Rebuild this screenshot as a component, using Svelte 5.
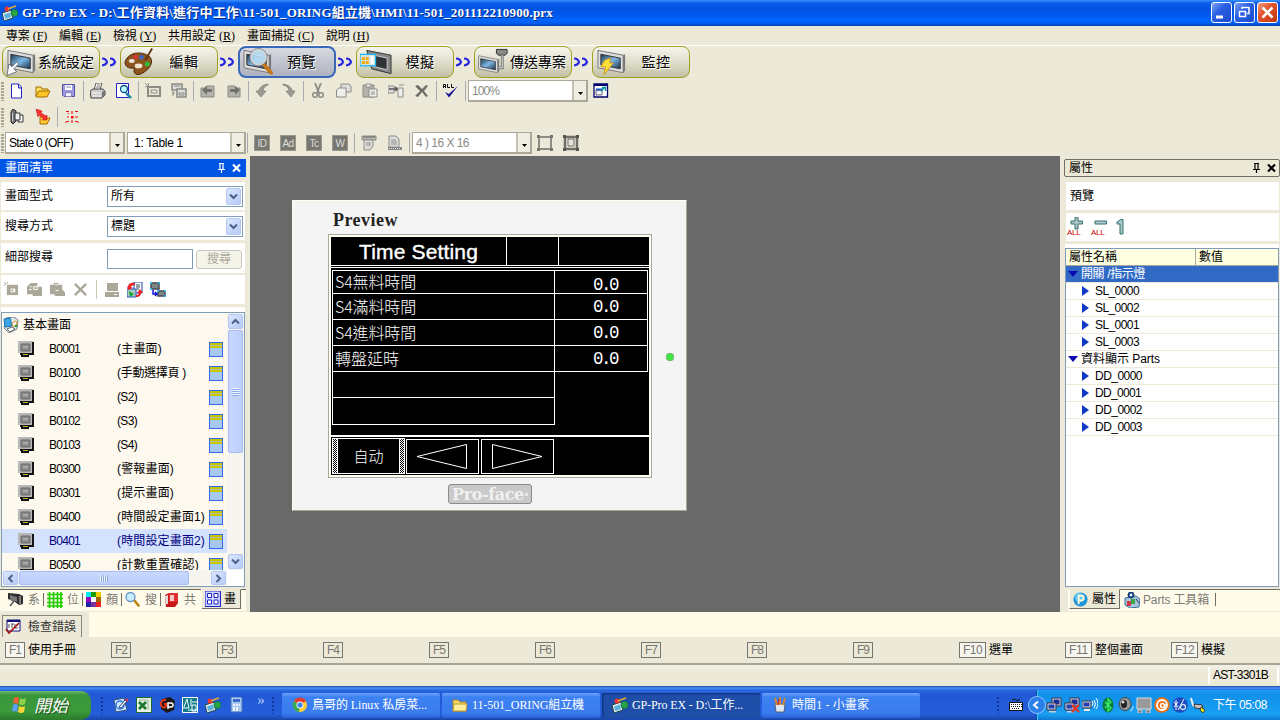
<script>
  // Spreads or tightens a label so that it takes the given width in pixels.
  function fit(node, width) {
    const n = [...node.textContent].length;
    node.style.letterSpacing = '0px';
    const natural = node.getBoundingClientRect().width;
    node.style.letterSpacing = (width - natural) / n + 'px';
  }

  const page = 'M4 1H11L14 4V15H4Z';
  const G = '#8c8c84';
  const frame = '<path d="M2 2L28 7V25L2 20Z" fill="#ddd" stroke="#777"/><path d="M2 20L28 25L30 23V6L28 7V25Z" fill="#777"/><path d="M5 6L25 10V21L5 17Z" fill="url(#scr)" stroke="#333"/>';
  const pc = '<path d="M6 1h9v8H6z" fill="#d8d8ee" stroke="#334"/><path d="M7.500 2.500h6v5h-6z" fill="#1a2f9a"/><path d="M1 6h9v7H1z" fill="#d8d8ee" stroke="#334"/><path d="M2.500 7.500h6v4h-6z" fill="#2440a8"/><path d="M3 14h7v1.500H3z" fill="#ccd"/>';
  const parts = '<path d="M0 8l9-3 2 8-9 3z" fill="#dde8ee" stroke="#244"/><path d="M2 9.500l6-2 1 4.500-5.500 2z" fill="#59b0d8"/><circle cx="12.500" cy="8" r="3.500" fill="#29a545" stroke="#175"/><circle cx="5" cy="4" r="2.500" fill="#e33"/><path d="M6 4l5-2 3-1" stroke="#da3" stroke-width="1.800" fill="none"/>';

  const icons = {
    app: parts,
    new: '<path d="' + page + '" transform="translate(-1.500)" fill="#fff" stroke="#2222c8"/><path d="M9.500 1v4h3" fill="#bcd" stroke="#2222c8"/>',
    open: '<path d="M1 13V4h5l1 2h6v3" fill="#ffe060" stroke="#a46b00"/><path d="M1 13L4 8h11l-3 6H1z" fill="#ffc526" stroke="#a46b00"/>',
    save: '<path d="M1.500 1.500h12v12H3L1.500 12z" fill="#9c98e0" stroke="#54509c"/><path d="M4 2h7v5H4z" fill="#fff"/><path d="M5 4h5" stroke="#88a"/><path d="M4.500 9.500h6v4h-6z" fill="#eef" stroke="#8884b8"/>',
    print: '<path d="M4 7L6 0h6l-2 7z" fill="#fff" stroke="#555"/><path d="M7 2h3M6 4h4" stroke="#777"/><path d="M0 8l3-2h10l2 2v4l-3 3H1z" fill="#ccc" stroke="#444"/><path d="M2 10h9M2 13h9" stroke="#f4f4f4"/><path d="M12 9l3-2v5l-3 3z" fill="#777"/>',
    find: '<path d="M.5 .5h12v14H.5z" fill="#fff" stroke="#2222c8"/><path d="M10 10l5 5" stroke="#28a" stroke-width="2.500"/><circle cx="8" cy="6" r="3.500" fill="#bff" stroke="#124a90" stroke-width="1.300"/>',
    scr: '<path d="M0 0l3 3M0 4l3-1M4 0L3 3" stroke="' + G + '"/><path d="M3 4h12v9H3z" fill="none" stroke="' + G + '" stroke-width="2"/><path d="M6 7h6v3H6z" fill="none" stroke="' + G + '"/>',
    scrs: '<path d="M1 1h10v6H1z" fill="#ddd" stroke="' + G + '" stroke-width="1.600"/><path d="M6 6h9v8H6z" fill="#ddd" stroke="' + G + '" stroke-width="1.600"/><path d="M3 3h6M8 10h5v2H8z" stroke="' + G + '" fill="none"/><path d="M1 10h3M2 8v5" stroke="' + G + '"/>',
    back: '<path d="M1 5h5V3h8v11H1z" fill="#b4b4ac" stroke="' + G + '"/><path d="M2 7l5-4v3h5v3H7v3z" fill="#72726c"/>',
    fwd: '<path d="M2 3h7v2h5v9H2z" fill="#b4b4ac" stroke="' + G + '"/><path d="M14 7L9 3v3H4v3h5v3z" fill="#72726c"/>',
    undo: '<path d="M13 1C7 2 4 5 4 8H1l5 6 5-6H8c0-3 2-5 5-6z" fill="#9c9c94" stroke="#77776f" stroke-width=".7"/>',
    redo: '<path d="M2 1c6 1 9 4 9 7h3l-4 6-5-6h3C8 5 6 3 2 2z" fill="#9c9c94" stroke="#77776f" stroke-width=".7"/>',
    cut: '<path d="M5 0l4 10M11 0L7 10" stroke="' + G + '" stroke-width="1.800"/><circle cx="5" cy="12" r="2.300" fill="none" stroke="' + G + '" stroke-width="1.500"/><circle cx="11" cy="12" r="2.300" fill="none" stroke="' + G + '" stroke-width="1.500"/>',
    copy: '<path d="M5 1h8l2 2v6H5z" fill="#ddd" stroke="' + G + '"/><path d="M3 5h7v9H.5V7z" fill="#eee" stroke="' + G + '"/>',
    paste: '<path d="M1 2h11v12H1z" fill="#b4b4ac" stroke="' + G + '"/><path d="M4 1h5v3H4z" fill="#eee" stroke="' + G + '"/><path d="M7 6h8v8H7z" fill="#eee" stroke="' + G + '"/><path d="M9 9h4M9 11h4" stroke="' + G + '"/>',
    move: '<path d="M0 3h6v7H0z" fill="#ddd" stroke="' + G + '"/><path d="M1 6h8M7 4l3 2-3 2" stroke="#555" fill="none" stroke-width="1.500"/><path d="M10 5h5v9h-5zM11 2h5" fill="#eee" stroke="' + G + '"/>',
    del: '<path d="M1 3l3-1 4 4 4-4 2 1-4 5 4 5-2 1-4-5-4 5-3-1 5-5z" fill="#6e6e68"/>',
    check: '<path d="M2 9l4 5.500L15 3l-7 6-2 2z" fill="#11119a"/><path d="M.5 5V1.500h2V5M.5 3.500h2M4.500 1v3.500h2.500M8.500 1v3.500h2.500" stroke="#111" fill="none"/>',
    popup: '<path d="M1 1h13.500v13H1z" fill="#fff" stroke="#00006c" stroke-width="1.300"/><path d="M1 1h13v2H1z" fill="#00006c"/><path d="M3 7h6v5H3z" fill="#eee" stroke="#667"/><path d="M3 6.500h7" stroke="#15c" stroke-width="2"/><path d="M8 8l4-4M9 4.500h3.500V8" stroke="#0a8f9e" fill="none" stroke-width="1.500"/>',
    book: '<path d="M2 3l2-3 3 2v10l-3 3-2-2z" fill="#777" stroke="#222"/><path d="M3.500 4v8" stroke="#ccc"/><path d="M9 6h5v7H9z" fill="#fff" stroke="#333"/><path d="M6 4h5v7H6z" fill="#eee" stroke="#333"/>',
    import: '<path d="M5 8h4l1 1h5l-3 6H5z" fill="#fc3" stroke="#a46b00"/><path d="M1 0l6 2-1 2 5 3 1-1v5H7l1.500-1.500L4 6 3 8z" fill="#f33" stroke="#b00" stroke-width=".5"/>',
    spark: '<path d="M2 2.500h3M4.500 4v1M8 2v3M11 2.500h3M2 12.500h3M8 11v3M11 12.500h3M2 14v-1M14 14v-1M3 8h2M11 8h3" stroke="#e81818" stroke-width="1.200"/><path d="M7 7h2.500v2.500H7z" fill="#f00"/>',
    doc1: '<path d="M1 1h14v4H1z" fill="#b8b8b0" stroke="' + G + '"/><path d="M3 1v2M5 1v2M7 1v2M9 1v2M11 1v2M13 1v2" stroke="#666"/><path d="M3 5h9v6l-3 4H3z" fill="#ddd" stroke="' + G + '"/><path d="M5 8h5M5 10h5" stroke="' + G + '"/>',
    doc2: '<path d="M2 1h7l3 3v8H2z" fill="#ddd" stroke="' + G + '"/><path d="M4 5h5M4 7h6M4 9h6" stroke="' + G + '"/><path d="M1 12h14v3H1z" fill="#888"/><path d="M2 13.500h12" stroke="#ddd" stroke-dasharray="1 1"/>',
    rect: '<path d="M2 2h12v12H2z" fill="none" stroke="#6e6e68" stroke-width="1.500"/><path d="M0 0h3v3H0zM13 0h3v3h-3zM0 13h3v3H0zM13 13h3v3h-3z" fill="#77776f"/>',
    rect2: '<path d="M2 2h12v12H2z" fill="none" stroke="#6e6e68" stroke-width="2.500"/><path d="M5 4h6v7H5z" fill="#e4e4dc" stroke="#6e6e68"/><path d="M0 0h3v3H0zM13 0h3v3h-3zM0 13h3v3H0zM13 13h3v3h-3z" fill="#55554f"/>',
    gscr: '<path d="M0 0l2 2M0 3h2M4 0L3 2" stroke="#aca899"/><path d="M3 3h12v11H3z" fill="#aca899"/><path d="M7 7h5v4H7z" fill="#fff"/><path d="M8 8h2v2H8z" fill="#aca899"/>',
    gcopy: '<path d="M0 5l4-4h7v4h5v10H6v-2H0z" fill="#aca899"/><path d="M3 5h2M2 8h3M7 5h4v3H7z" stroke="#fff" fill="none"/>',
    gpaste: '<path d="M0 3h4V1h5v2h4v5l3 3v4H5v-2H0z" fill="#aca899"/><path d="M5 3h4M6 9h3" stroke="#fff"/>',
    gdel: '<path d="M2 2l12 12M14 2L2 14" stroke="#aca899" stroke-width="2.500"/>',
    gpc: '<path d="M3 1h11v8H3zM1 10h14v5H1z" fill="#aca899"/><path d="M10 12.500h3" stroke="#fff"/>',
    swap: '<path d="M7 0h8v11H7z" fill="#fff" stroke="#1a46a8"/><path d="M9 3h4M9 5h4M9 7h3" stroke="#345"/><path d="M0 7h9v8H0z" fill="#a8c8c0" stroke="#2b58c0"/><path d="M2 9l5 3-4 3z" fill="#12a532"/><path d="M8 1C3 0 1 3 1 5L0 4l1 4 5-2-2-1c0-1 1-2 4-2zM9 15c4 0 5-2 5-4h2l-3-4-3 4h2c0 1-1 2-3 2z" fill="#e22"/>',
    link: '<path d="M1 1h8v6H1zM8 9h7v5H8z" fill="#80868a" stroke="#444a50" stroke-width="1.500"/><path d="M0 0h2v2H0zM8 0h2v2H8zM0 6h2v2H0zM7 8h2v2H7zM14 8h2v2h-2zM14 13h2v2h-2z" fill="#38b0e0"/><path d="M3 8v4h4M5 10l2 2-2 2" stroke="#11d" stroke-width="1.500" fill="none"/>',
    base: '<path d="M3 1l8-1 4 3-1 9-8 4-5-5z" fill="#dde4ea" stroke="#78868f"/><path d="M1 2l6-1 2 8-7 1z" fill="#39a5e8" stroke="#1b6fb0"/><path d="M9 6l4-2 1 3-4 3z" fill="#fff" stroke="#e0952b"/><path d="M4 12l5-2 3 2-5 3z" fill="#fff" stroke="#666"/><circle cx="13" cy="9" r="1.300" fill="#2a9d3a"/>',
    mon: '<path d="M0 0h15v12H0z" fill="#b8b8b8"/><path d="M14 1h2v13H2v-2h12z" fill="#151515"/><path d="M3 3h9v7H3z" fill="#8a8a8a" stroke="#666"/><path d="M5 6h5" stroke="#ccc"/><path d="M3 13h8v3H3z" fill="#111"/><path d="M5 13h5v1H5z" fill="#c8b400"/>',
    camera: '<path d="M0 1l11 1 4 2v8l-4 1-4-3-7-3z" fill="#2e2e2e"/><path d="M2 3l7 2v5L2 8z" fill="#777"/><path d="M12 4v8" stroke="#999" stroke-width="1.500"/><path d="M2 14l4-5" stroke="#555" stroke-width="1.500"/>',
    grid: '<path d="M0 2.500h16M0 6.500h16M0 10.500h16M0 14h16M2.500 0v16M6.500 0v16M10.500 0v16M14 0v16" stroke="#2c0" stroke-width="1.700"/>',
    palette: '<path d="M0 0h5v5H0z" fill="#0ee"/><path d="M5 0h5v5H5z" fill="#290"/><path d="M10 0h5v5h-5z" fill="#ec0"/><path d="M0 5h5v5H0z" fill="#90b"/><path d="M5 5h5v5H5z" fill="#fff"/><path d="M10 5h5v5h-5z" fill="#960"/><path d="M0 10h5v5H0z" fill="#22a"/><path d="M5 10h5v5H5z" fill="#739"/><path d="M10 10h5v5h-5z" fill="#e22"/>',
    mag: '<path d="M9 8l4.500 5.500" stroke="#b8860b" stroke-width="2.600" stroke-linecap="round"/><circle cx="5.500" cy="5" r="4.500" fill="#c8ecff" stroke="#6a96c8" stroke-width="1.300"/>',
    red: '<path d="M1 3l4-2h9v10l-3 4H2z" fill="#c81818"/><path d="M5 1h9v9H5z" fill="#e03030"/><path d="M6 3h4v6H6z" fill="#f6c8c8"/><path d="M1 4l3-1v9H2z" fill="#ddd"/>',
    panes: '<path d="M0 0h15.500v15.500H0z" fill="#cdd8ff" stroke="#2222c8" stroke-width="1.200"/><path d="M2.500 2.500h4v4h-4zM9 2.500h4v4H9zM2.500 9h4v4h-4zM9 9h4v4H9z" fill="#fff" stroke="#2222c8"/>',
    err: '<path d="M2 1h13v11H2z" fill="#fff" stroke="#11117c"/><path d="M2 1h13v2H2z" fill="#11117c"/><path d="M4 5v4M6 5h3M7 5v4M10 5v4h3" stroke="#555" fill="none"/><path d="M1 10l3 4L14 4" stroke="#a01010" stroke-width="1.700" fill="none"/>',
    prop: '<circle cx="8" cy="8" r="7.500" fill="#1b93d8"/><circle cx="7" cy="6" r="5" fill="#5cc8f4"/><path d="M6 13V4h3a2 2 0 010 5H6" fill="none" stroke="#fff8d8" stroke-width="2"/>',
    toolbox: '<path d="M1 6l11-2 4 3-1 8-9 1-5-3z" fill="#a8c4dc" stroke="#36709c"/><path d="M3 9h4v5H3z" fill="#d23a4a"/><path d="M7 7h4v5H7z" fill="#3aa546"/><circle cx="7" cy="3" r="3" fill="#2a62c8" stroke="#134"/><circle cx="7" cy="3" r="1.200" fill="#fff"/><path d="M12 7l3 4" stroke="#334"/>',
    allplus: '<path d="M8 0h3v4h4.500v3H11v5H8V7H4V4h4z" fill="#a8c4c4" stroke="#36706c"/>',
    allminus: '<path d="M4 4h11.500v3H4z" fill="#b4c8d0" stroke="#36706c"/>',
    one: '<path d="M2 3l4-2.500h2V15H5V5H2z" fill="#a8c8c8" stroke="#36706c"/>',
    mail: '<path d="M1 3l10-2 3 12-11 2z" fill="#cfe4ff" stroke="#357"/><circle cx="7" cy="8" r="4" fill="none" stroke="#2c7ae0" stroke-width="1.500"/><path d="M6 10l6-7 2 1-6 7z" fill="#fff" stroke="#247"/><path d="M13 2l2 2" stroke="#e33" stroke-width="2"/>',
    excel: '<path d="M.5 .5h15v15H.5z" fill="#e8f2e4" stroke="#1c6a2c"/><path d="M3 5l7 7M10 5l-7 7" stroke="#1c7a30" stroke-width="2.800"/><path d="M12 4v9M3 3h10" stroke="#8cb894"/>',
    gp: '<path d="M3 2l8-2 5 4-1 9-7 3-6-4z" fill="#201818"/><path d="M7 3C4 2 1 5 2 8s4 3 5 1V7H5" fill="none" stroke="#e31" stroke-width="2"/><path d="M9 12V6h3a2 2 0 010 4H9" fill="none" stroke="#fff" stroke-width="1.500"/>',
    cad: '<path d="M.5 .5h15v15H.5z" fill="#0e7c88" stroke="#fff"/><path d="M1 11h6M2 10l3-8 2 9M9 2v7M6 13h9M10 8h4v6h-4zM10 5h5" stroke="#fff" fill="none"/>',
    calc: '<path d="M3 0h10l1 1v14H3z" fill="#a8c8f4" stroke="#4a72b4"/><path d="M5 2h7v3H5z" fill="#3b6bc8"/><path d="M5 8h2M8 8h2M11 8h1M5 11h2M8 11h2M5 13h2M8 13h2" stroke="#fff" stroke-width="1.500"/>',
    chrome: '<circle cx="8" cy="8" r="7" fill="#fc3"/><path d="M8 8L2 4a7 7 0 0112 0z" fill="#e33b2e"/><path d="M8 8L2 4a7 7 0 005 11z" fill="#34a853"/><circle cx="8" cy="8" r="3.500" fill="#fff"/><circle cx="8" cy="8" r="2.600" fill="#3b82ea"/>',
    folder: '<path d="M1 14V3h5l2 2h6v9z" fill="#f6d868" stroke="#b08a20"/><path d="M1 14l1-7h13l-1 7z" fill="#fff0a0" stroke="#c09a30"/>',
    paint: '<path d="M3 7h10l-1 8H4z" fill="#dfe9f4" stroke="#567"/><path d="M5 8L3 1M8 8V0M11 8l2-7" stroke="#e08a2c" stroke-width="1.800"/><path d="M6 8l1-6" stroke="#c33" stroke-width="1.500"/>',
    kbd: '<path d="M1.500 6.500h13v8h-13z" fill="#fff" stroke="#111"/><path d="M3 8.500h11M3 10.500h11M4 12.500h8" stroke="#222" stroke-dasharray="1 1"/><path d="M4 4q2-2 4 0t4-1" stroke="#111" fill="none"/>',
    net: pc,
    netx: pc + '<path d="M8 8l7 7M15 8l-7 7" stroke="#f33018" stroke-width="2"/>',
    wifi: '<path d="M0 4h9v7H0z" fill="#d8d8ee" stroke="#334"/><path d="M1.500 5.500h6v4h-6z" fill="#2440a8"/><path d="M2 13h6" stroke="#eee" stroke-width="2"/><path d="M10 4q2 3 0 5M12 3q3 4 0 8M14 1q4 6 0 11" stroke="#fff" fill="none"/>',
    bt: '<ellipse cx="8" cy="8" rx="5.500" ry="7.500" fill="#0c7c3c"/><path d="M5 5l6 6-3 3V2l3 3-6 6" stroke="#3bf06a" fill="none" stroke-width="1.300"/>',
    spk: '<ellipse cx="7" cy="7" rx="6" ry="6.500" fill="#999" stroke="#444"/><ellipse cx="6" cy="7" rx="3" ry="4" fill="#222"/><circle cx="5" cy="5" r="1.500" fill="#ddd"/><path d="M12 14q3-1 3-5" stroke="#8cf" fill="none" stroke-width="1.500"/>',
    hub: '<path d="M1 1h14v11H1z" fill="#999" stroke="#ddd"/><path d="M2 13h4v3H2zM10 13h4v3h-4z" fill="#777" stroke="#ccc"/>',
    avast: '<circle cx="8" cy="8" r="7.800" fill="#f07010"/><circle cx="8" cy="8" r="5" fill="none" stroke="#fff" stroke-width="1.800"/><circle cx="8.500" cy="8.500" r="2" fill="none" stroke="#fff" stroke-width="1.400"/><path d="M11 7v5" stroke="#fff" stroke-width="1.400"/>',
    disc: '<circle cx="8" cy="8" r="7.800" fill="#1d4cc0"/><path d="M2 5l4 5M6 5L2 10M4 3v10M6 13l6-11" stroke="#fff"/><circle cx="11" cy="10" r="2.500" fill="none" stroke="#cde" stroke-width="1.300"/>',
    plug: '<path d="M1 1l2 7 5 3" stroke="#eee" stroke-width="2" fill="none"/><path d="M4 7l8 1 1 4-8-1z" fill="#ccc" stroke="#333"/><path d="M11 10l4 3-2 3-3-3z" fill="#e8e020" stroke="#442"/>'
  };

  const wizIcons = {
    setup: frame + '<path d="M1 28l2-12 3 3 5-5 2 2-5 5 3 3z" fill="#fff" stroke="#456" stroke-width=".8"/>',
    edit: '<path d="M1 14C4 4 17 2 26 8c6 6 0 14-8 18-7 3-9-2-7-6-4 1-10 0-10-6z" fill="#8e5420" stroke="#4a2608"/><ellipse cx="8" cy="13" rx="3" ry="2" fill="#e8e4dc"/><circle cx="12" cy="9" r="2.300" fill="#d33"/><circle cx="18" cy="9" r="2.300" fill="#36c"/><circle cx="24" cy="16" r="2.600" fill="#3b3"/><ellipse cx="15" cy="18" rx="4" ry="2.500" fill="#f2e4cc"/><path d="M22 12L29 0" stroke="#5a3008" stroke-width="1.800"/>',
    preview: frame + '<path d="M22 16l8 9" stroke="#c87418" stroke-width="4" stroke-linecap="round"/><circle cx="17" cy="9" r="8" fill="#b8dcf4" fill-opacity=".9" stroke="#d4d4d4" stroke-width="2"/><circle cx="17" cy="9" r="9" fill="none" stroke="#667" stroke-width=".7"/>',
    sim: '<path d="M7 2L32 7V26L12 21Z" fill="#888" stroke="#333"/><path d="M10 6L28 10V22L12 18Z" fill="#303438" stroke="#ccc"/><path d="M0 6h16v12H0z" fill="#d8e0e0" stroke="#18b8f0" stroke-width="1.300"/><path d="M2 9h3v3H2zM6 9h3v3H6zM2 13h3v3H2zM6 13h3v3H6z" fill="#f0a800"/><path d="M11 8h3v8h-3z" fill="#fff"/>',
    send: '<g transform="translate(-1 6) scale(.76)">' + frame + '</g><path d="M19 1h11v4l-2 2h-7l-2-2z" fill="#888" stroke="#333"/><path d="M25 7v13h-4" stroke="#777" stroke-width="3" fill="none"/><path d="M25 7v13h-4" stroke="#ddd" fill="none"/>',
    monitor: frame + '<path d="M9 12l6-2-1 5h4L8 27l2-8H5z" fill="#ffe13a" stroke="#d89000" stroke-width=".8"/>'
  };

  const menus = [['專案', 'F', 41], ['編輯', 'E', 42], ['檢視', 'Y', 43], ['共用設定', 'R', 67], ['畫面捕捉', 'C', 67], ['說明', 'H', 43]];
  const wizard = [
    ['setup', '系統設定', 56], ['edit', '編輯', 29], ['preview', '預覽', 29],
    ['sim', '模擬', 29], ['send', '傳送專案', 56], ['monitor', '監控', 29]
  ];
  const groups = [['new', 'open', 'save'], ['print', 'find'], ['scr', 'scrs'], ['back', 'fwd'], ['undo', 'redo'], ['cut', 'copy', 'paste', 'move', 'del'], ['check']];
  const screens = [
    ['B0001', '(主畫面)', 45], ['B0100', '(手動選擇頁 )', 69], ['B0101', '(S2)', 20], ['B0102', '(S3)', 20],
    ['B0103', '(S4)', 20], ['B0300', '(警報畫面)', 57], ['B0301', '(提示畫面)', 57],
    ['B0400', '(時間設定畫面1)', 88], ['B0401', '(時間設定畫面2)', 88], ['B0500', '(計數重置確認)', 82]
  ];
  const tabs = [['camera', '系'], ['grid', '位'], ['palette', '顏'], ['mag', '搜'], ['red', '共'], ['panes', '畫']];
  const props = [
    ['開關 /指示燈', true, 64], ['SL_0000', false, 44], ['SL_0002', false, 44], ['SL_0001', false, 44], ['SL_0003', false, 44],
    ['資料顯示 Parts', true, 79], ['DD_0000', false, 47], ['DD_0001', false, 46], ['DD_0002', false, 47], ['DD_0003', false, 47]
  ];
  const timers = ['S4無料時間', 'S4滿料時間', 'S4進料時間', '轉盤延時', '', ''];
  const keys = ['使用手冊', '', '', '', '', '', '', '', '', '選單', '整個畫面', '模擬'];
  const tasks = [
    ['chrome', '鳥哥的 Linux 私房菜...', 115], ['folder', '11-501_ORING組立機', 112],
    ['app', 'GP-Pro EX - D:\\工作...', 111], ['paint', '時間1 - 小畫家', 77]
  ];
</script>

{#snippet ic(name, size = 16)}
  <svg class="ic" width={size} height={size} viewBox="0 0 16 16">{@html icons[name]}</svg>
{/snippet}

{#snippet arrow(rot)}
  <svg class="ic" width="9" height="9" viewBox="0 0 9 9"><path d="M1 2.500L4.500 6L8 2.500" transform="rotate({rot} 4.500 4.500)" fill="none" stroke="#4d6185" stroke-width="2" /></svg>
{/snippet}

{#snippet drop()}
  <b><svg width="5" height="3"><path d="M0 0h5L2.500 3z" fill="#000" /></svg></b>
{/snippet}

{#snippet pins(color)}
  <svg class="ic pins" width="26" height="12" viewBox="0 0 26 12">
    <path d="M3 1.500h5M4 1v6M7 1v6M2 7.500h7M5.500 8v3" stroke={color} stroke-width="1.200" fill="none" />
    <path d="M17 2.500l7 7M24 2.500l-7 7" stroke={color} stroke-width="2.200" />
  </svg>
{/snippet}

<svg class="defs" width="0" height="0">
  <linearGradient id="scr" x1="0" y1="0" x2="1" y2="1">
    <stop offset="0" stop-color="#1a3850" /><stop offset=".5" stop-color="#7eb8e4" /><stop offset="1" stop-color="#16304c" />
  </linearGradient>
</svg>

<div class="win">
  <header class="title">
    {@render ic('app')}
    <b use:fit={531}>GP-Pro EX - D:\工作資料\進行中工作\11-501_ORING組立機\HMI\11-501_201112210900.prx</b>
    <div class="wbtns">
      <i><svg width="20" height="20"><path d="M4 14h7" stroke="#fff" stroke-width="3" /></svg></i>
      <i><svg width="20" height="20"><path d="M4.500 8.500h6v5h-6zM7 6V4.500h7v6h-2" fill="none" stroke="#fff" stroke-width="1.500" /></svg></i>
      <i class="x"><svg width="20" height="20"><path d="M4.500 4.500l10 10M14.500 4.500l-10 10" stroke="#fff" stroke-width="2.500" /></svg></i>
    </div>
  </header>

  <nav class="menu">
    {#each menus as [label, key, w]}<span use:fit={w}>{label} <em>(<u>{key}</u>)</em></span>{/each}
  </nav>

  <div class="wizard">
    {#each wizard as [name, label, w], i}
      {#if i}<svg class="chev" width="20" height="12"><path d="M2 2.500q4 0 5 3.500q-1 3-5 3.500M10 2.500q4 0 5 3.500q-1 3-5 3.500" fill="none" stroke="#2626e0" stroke-width="2.200" /></svg>{/if}
      <div class="step" class:on={name === 'preview'}>
        <svg width="32" height="29" viewBox="0 0 33 29">{@html wizIcons[name]}</svg>
        <div class="lab"><span use:fit={w}>{label}</span></div>
      </div>
    {/each}
  </div>

  <div class="bar">
    <i class="grip"></i>
    {#each groups as g}
      {#each g as name}<div class="tb">{@render ic(name)}</div>{/each}
      <i class="sep"></i>
    {/each}
    <div class="combo dim w120"><span use:fit={27}>100%</span>{@render drop()}</div>
    <div class="tb">{@render ic('popup')}</div>
  </div>
  <div class="bar">
    <i class="grip"></i>
    <div class="tb">{@render ic('book')}</div><div class="tb">{@render ic('import')}</div>
    <i class="sep"></i>
    <div class="tb">{@render ic('spark')}</div>
  </div>
  <div class="bar">
    <i class="grip"></i>
    <div class="combo w120"><span use:fit={64}>State 0 (OFF)</span>{@render drop()}</div>
    <div class="combo w119"><span class="ind"><span use:fit={49}>1: Table 1</span></span>{@render drop()}</div>
    <i class="sep"></i>
    {#each ['ID', 'Ad', 'Tc', 'W'] as t}<div class="tb"><span class="sq">{t}</span></div>{/each}
    <i class="sep"></i>
    <div class="tb">{@render ic('doc1')}</div><div class="tb">{@render ic('doc2')}</div>
    <i class="sep"></i>
    <div class="combo dim w120"><span use:fit={53}>4 ) 16 X 16</span>{@render drop()}</div>
    <div class="tb">{@render ic('rect')}</div><div class="tb">{@render ic('rect2')}</div>
  </div>

  <main>
    <aside class="left">
      <div class="ptitle"><span>畫面清單</span>{@render pins('#fff')}</div>
      <div class="prow"><span>畫面型式</span><div class="select"><span>所有</span><b>{@render arrow(0)}</b></div></div>
      <div class="prow"><span>搜尋方式</span><div class="select"><span>標題</span><b>{@render arrow(0)}</b></div></div>
      <div class="prow third"><span>細部搜尋</span><div class="input"></div><div class="btn">搜尋</div></div>
      <div class="ptools">
        {#each ['gscr', 'gcopy', 'gpaste', 'gdel'] as n}{@render ic(n, 15)}{/each}
        <i></i>
        {#each ['gpc', 'swap', 'link'] as n}{@render ic(n)}{/each}
      </div>
      <div class="listwrap">
        <div class="list">
          <div class="lmain">
            <div class="items">
              <div class="root">{@render ic('base')}<span use:fit={48}>基本畫面</span></div>
              {#each screens as [id, label, w]}
                <div class="item" class:sel={id === 'B0401'}>
                  {@render ic('mon')}
                  <span class="id"><span use:fit={31}>{id}</span></span>
                  <span class="nm"><span use:fit={w}>{label}</span></span>
                  <i class="card"></i>
                </div>
              {/each}
            </div>
            <div class="vsb"><b>{@render arrow(180)}</b><div class="vthumb"><i></i></div><div class="track"></div><b>{@render arrow(0)}</b></div>
          </div>
          <div class="hsb"><b>{@render arrow(90)}</b><div class="hthumb"><i></i></div><div class="track"></div><b>{@render arrow(-90)}</b></div>
        </div>
      </div>
      <div class="tabs lt">
        {#each tabs as [n, t], i}<div class="tab" class:cur={i === 5}>{@render ic(n)}<span>{t}</span></div>{/each}
        <div class="fill"></div>
      </div>
    </aside>

    <section class="work">
      <div class="device">
        <h1 use:fit={65}>Preview</h1>
        <i class="led"></i>
        <div class="screen">
          <div class="shead"><div><span use:fit={119}>Time Setting</span></div><div></div><div></div></div>
          <div class="sbody">
            {#each timers as t, i}
              <div class="trow" class:empty={!t} class:last={i === 5}>
                <div class="tl">{#if t}<span use:fit={i === 3 ? 64 : 81}>{t}</span>{/if}</div>
                {#if t}<div class="tv" class:low={i === 0}><span use:fit={24}>0.0</span></div>{/if}
              </div>
            {/each}
          </div>
          <div class="snav">
            <div class="auto"><div><span use:fit={30}>自动</span></div></div>
            <div class="nb"><svg width="71" height="33"><path d="M10 16.500L59.500 4.500v24z" fill="none" stroke="#fff" /></svg></div>
            <div class="nb"><svg width="71" height="33"><path d="M60 16.500L10.500 4.500v24z" fill="none" stroke="#fff" /></svg></div>
          </div>
        </div>
        <div class="brand"><span use:fit={77}>Pro-face·</span></div>
      </div>
    </section>

    <aside class="right">
      <div class="ptitle"><span>屬性</span>{@render pins('#000')}</div>
      <div class="prow">預覽</div>
      <div class="prow tools">
        <div class="all">{@render ic('allplus')}<small>ALL</small></div>
        <div class="all">{@render ic('allminus')}<small>ALL</small></div>
        {@render ic('one')}
      </div>
      <div class="pl">
        <div class="ph"><span>屬性名稱</span><span>數值</span></div>
        {#each props as [label, top, w], i}
          <div class="pr" class:sel={i === 0} class:top>
            <svg width="10" height="10"><path d={top ? 'M0 2h10L5 8z' : 'M2 0l7 5-7 5z'} fill={top ? '#0a0ab0' : '#1238c8'} /></svg>
            <span use:fit={w}>{label}</span>
          </div>
        {/each}
      </div>
      <div class="tabs rt">
        <div class="tab cur">{@render ic('prop', 15)}<span>屬性</span></div>
        <div class="tab">{@render ic('toolbox')}<span use:fit={66}>Parts 工具箱</span></div>
        <div class="fill"></div>
      </div>
    </aside>
  </main>

  <div class="errbar"><div class="errtab">{@render ic('err')}<span>檢查錯誤</span></div><div class="cream"></div></div>

  <div class="fkeys">
    {#each keys as k, i}<div class="fk"><kbd class:lit={k}><span use:fit={i < 9 ? 12 : 19}>F{i + 1}</span></kbd>{#if k}<span>{k}</span>{/if}</div>{/each}
  </div>
  <div class="status"><div><span use:fit={55}>AST-3301B</span></div></div>

  <footer>
    <div class="start">
      <svg width="20" height="20" viewBox="0 0 20 20"><path d="M4 3q3-2 5 0L8 9q-3-2-5 0z" fill="#f0603a" /><path d="M10 3q3 2 6 0l-1 6q-3 2-6 0z" fill="#8ccf4a" /><path d="M3 10q2-2 5 0l-1 7q-3-2-5 0z" fill="#5aa0f8" /><path d="M9 11q3 2 6 0l-1 6q-3 2-6 0z" fill="#fad43a" /></svg>
      <i>開始</i>
    </div>
    <i class="dots d1"></i>
    <div class="quick">{#each ['mail', 'excel', 'gp', 'cad', 'app', 'calc'] as n}{@render ic(n)}{/each}</div>
    <span class="more">»</span>
    <i class="dots"></i>
    <div class="tasks">
      {#each tasks as [n, t, w], i}<div class="task" class:act={i === 2}>{@render ic(n)}<span use:fit={w}>{t}</span></div>{/each}
    </div>
    <div class="rest"><i class="dots"></i>{@render ic('kbd')}</div>
    <div class="tray">
      <b><svg width="16" height="16"><path d="M9 4.500L5 8l4 3.500" fill="none" stroke="#fff" stroke-width="2" /></svg></b>
      <div class="tics">{#each ['net', 'netx', 'wifi', 'bt', 'spk', 'hub', 'avast', 'disc', 'plug'] as n}{@render ic(n)}{/each}</div>
      <span use:fit={54}>下午 05:08</span>
    </div>
  </footer>
</div>

<style>
  :global(body) { margin: 0; overflow: hidden; }
  * { box-sizing: border-box; }
  .win { width: 1280px; height: 720px; display: flex; flex-direction: column; background: #ece9d8; font: 12px/16px "Liberation Sans", "Noto Sans CJK TC", sans-serif; color: #000; white-space: nowrap; overflow: hidden; }
  .defs { position: absolute; }
  svg { display: block; flex: none; }
  i { font-style: normal; }
  span { white-space: pre; }

  .title { height: 26px; flex: none; display: flex; align-items: center; padding: 0 2px 0 2px; background: linear-gradient(#3b92ff 0, #0a5ce8 3px, #0053e1 8px, #0057ea 14px, #0066fe 20px, #0060f5 23px, #0040b8 26px); color: #fff; }
  .title b { margin-left: 4px; font: bold 13px/18px "Liberation Serif", "Noto Sans CJK TC", serif; text-shadow: 1px 1px #0a2a80; }
  .wbtns { margin-left: auto; display: flex; gap: 2px; margin-top: -1px; }
  .wbtns i { width: 21px; height: 21px; border: 1px solid #fff; border-radius: 3px; background: linear-gradient(135deg, #7ea4f4, #2a60e4 40%, #1c4ccc); }
  .wbtns i.x { background: linear-gradient(135deg, #f0a088, #e2532c 40%, #c03810); }

  .menu { height: 20px; flex: none; display: flex; gap: 12px; padding: 2px 0 0 6px; border-bottom: 1px solid #fff; }
  .menu em { font: 12px "Liberation Serif", serif; }

  .wizard { height: 32px; flex: none; display: flex; align-items: center; padding-left: 2px; }
  .step { width: 98px; height: 32px; display: flex; align-items: center; padding-left: 3px; border: 1px solid #a0a020; border-radius: 8px; background: linear-gradient(#f6f5ee, #dddcc8 55%, #c2c0a4); }
  .step.on { border: 2px solid #3a68b8; padding-left: 2px; background: linear-gradient(#d8dae0, #c2c5ce 50%, #aeb3c0); }
  .lab { flex: 1; display: flex; justify-content: center; font-size: 14px; line-height: 20px; margin-right: 5px; text-shadow: 1px 1px #fff; }

  .bar { height: 26px; flex: none; display: flex; align-items: center; padding-left: 1px; }
  .grip { width: 3px; height: 19px; background: repeating-linear-gradient(#a8a594 0 2px, #ece9d8 2px 3px); }
  .tb { width: 26px; height: 24px; display: flex; align-items: center; justify-content: center; }
  .sep { width: 3px; height: 20px; border-left: 1px solid #aca8b4; margin-left: 1px; margin-right: -1px; }
  .combo { height: 22px; display: flex; align-items: center; justify-content: space-between; border: 1px solid #aca899; border-right-width: 2px; border-bottom-width: 2px; background: #fff; padding-left: 3px; margin-left: 1px; }
  .combo b { width: 14px; height: 100%; border-left: 2px solid #c4c0b0; background: #f0eee2; display: flex; align-items: flex-end; justify-content: center; padding-bottom: 5px; }
  .combo.dim span { color: #8a8a84; }
  .w120 { width: 120px; }
  .w119 { width: 119px; margin-left: 2px; }
  .ind { padding-left: 3px; }
  .sq { width: 16px; height: 16px; background: #77776f; color: #ddd; font: 10px/15px "Liberation Sans"; letter-spacing: -.5px; text-align: center; border: 1px solid #99998f; }

  main { height: 456px; flex: none; display: flex; }
  .left { width: 250px; padding-top: 3px; display: flex; flex-direction: column; }
  .ptitle { height: 18px; flex: none; display: flex; align-items: center; justify-content: space-between; padding: 0 4px 0 5px; }
  .left .ptitle { width: 246px; background: #0054e3; color: #fff; margin-bottom: 5px; }
  .prow { height: 28px; flex: none; background: #fff; margin: 0 5px 2px 1px; display: flex; align-items: center; padding-left: 4px; }
  .left .prow > span { width: 102px; }
  .select { width: 136px; height: 21px; display: flex; justify-content: space-between; align-items: center; border: 1px solid #7f9db9; padding: 0 1px 0 3px; background: #fff; }
  .select b, .vsb b, .hsb b { width: 15px; height: 17px; display: flex; align-items: center; justify-content: center; border-radius: 2px; background: linear-gradient(135deg, #dbe6ff, #b6caf8); border: 1px solid #b4c6f2; }
  .prow.third { height: 30px; margin-top: 1px; padding-bottom: 3px; }
  .input { width: 86px; height: 20px; border: 1px solid #7f9db9; margin: 5px 3px 0 0; }
  .btn { width: 46px; height: 19px; margin-top: 5px; border: 1px solid #c9c7ba; border-radius: 3px; background: #f5f4ea; color: #aca899; text-align: center; line-height: 17px; }
  .ptools { height: 29px; flex: none; margin: 0 5px 3px 1px; background: #fff; display: flex; align-items: center; gap: 8px; padding-left: 3px; }
  .ptools i { width: 1px; height: 19px; background: #cdc9b8; margin-right: -1px; }
  .ptools i ~ :global(svg) { margin-right: -1px; }
  .listwrap { height: 280px; flex: none; margin: 0 5px 0 1px; background: #fff; padding-top: 5px; }
  .list { height: 275px; border: 1px solid #7f9db9; display: flex; flex-direction: column; background: #fff; }
  .lmain { height: 257px; display: flex; }
  .items { width: 225px; overflow: hidden; background: #fef9ee; }
  .root { height: 24px; display: flex; align-items: center; gap: 4px; padding-left: 1px; }
  .item { height: 24px; display: flex; align-items: center; padding-left: 16px; }
  .item.sel { background: #d4e2fe; color: #000080; }
  .id { width: 68px; padding-left: 15px; margin-right: 15px; }
  .id + .nm { width: 92px; }
  .card { width: 14px; height: 15px; border: 1px solid #316aeb; background: linear-gradient(#c8c400 0 2px, #b8c890 2px 3px, #c8c400 3px 5px, #a6c8ef 5px); }
  .vsb { width: 17px; padding: 1px; display: flex; flex-direction: column; background: #f6f5f0; }
  .vsb b { height: 15px; }
  .vthumb { height: 123px; margin: 1px 0; border: 1px solid #a8bef0; border-radius: 2px; background: linear-gradient(90deg, #c8d8fe, #bccefa); display: flex; align-items: center; justify-content: center; }
  .vthumb i { width: 7px; height: 8px; background: repeating-linear-gradient(#eef4fe 0 1px, #8caae6 1px 2px); }
  .track { flex: 1; }
  .hsb { height: 16px; width: 225px; display: flex; padding: 1px; background: #f6f5f0; }
  .hsb b { height: 14px; }
  .hthumb { width: 170px; height: 14px; margin: 0 1px; border: 1px solid #a8bef0; border-radius: 2px; background: linear-gradient(#c8d8fe, #bccefa); display: flex; align-items: center; justify-content: center; }
  .hthumb i { width: 8px; height: 7px; background: repeating-linear-gradient(90deg, #eef4fe 0 1px, #8caae6 1px 2px); }

  .tabs { height: 22px; flex: none; display: flex; margin-top: 2px; background: #fffbeb; width: 246px; }
  .tab { width: 39px; flex: none; height: 20px; display: flex; align-items: center; gap: 4px; border-top: 1px solid #716f64; padding-left: 3px; color: #7c7c74; background: linear-gradient(#716f64, #716f64) right center / 1px 13px no-repeat; }
  .lt .tab:first-child { width: 44px; padding-left: 8px; }
  .lt .tab:nth-child(5) { width: 40px; background: none; }
  .tab.cur { border-top-color: #ece9d8; border-right: 1px solid #716f64; border-bottom: 1px solid #716f64; background: #ece9d8; color: #000; padding-left: 3px; }
  .lt .tab.cur { width: 39px; margin-left: 1px; gap: 3px; }
  .fill { flex: 1; border-top: 1px solid #716f64; height: 1px; }

  .work { width: 810px; background: #696969; padding: 44px 0 0 42px; }
  .device { position: relative; width: 395px; height: 311px; background: #f4f4f4; border: 1px solid #fffff0; border-right-color: #aca899; border-bottom-color: #aca899; padding-left: 35px; display: flex; flex-direction: column; align-items: flex-start; }
  h1 { margin: 10px 0 5px 5px; font: bold 18px/18px "Liberation Serif", serif; color: #222; }
  .led { position: absolute; left: 373px; top: 152px; width: 8px; height: 8px; border-radius: 3px; background: #3ee83e; border: 1px solid #72b472; }
  .screen { width: 324px; height: 244px; border: 1px solid #aca899; padding: 2px; background: #fffff4; display: flex; flex-direction: column; color: #fff; }
  .shead { height: 29px; flex: none; background: #000; border-bottom: 1px solid #fff; display: flex; width: 318px; }
  .shead div { width: 176px; border-right: 1px solid #fff; display: flex; justify-content: center; align-items: center; font-size: 21px; line-height: 28px; padding-top: 1px; -webkit-text-stroke: .4px #fff; }
  .shead div:nth-child(2) { width: 52px; }
  .shead div:nth-child(3) { border: 0; width: 90px; }
  .sbody { width: 318px; height: 169px; flex: none; background: linear-gradient(#000 0 1px, #fff 1px 2px, #000 2px); padding: 4px 0 0 1px; }
  .trow { width: 316px; height: 26px; display: flex; border: 1px solid #fff; border-top: 0; font-family: "Noto Sans CJK TC", sans-serif; font-weight: 300; font-size: 16px; line-height: 24px; }
  .trow:first-child { border-top: 1px solid #fff; height: 24px; }
  .tl { width: 222px; border-right: 1px solid #fff; padding-left: 2px; }
  .trow:first-child .tl { line-height: 20px; }
  .tv { flex: 1; padding-left: 38px; font: 17.5px/27px "Liberation Mono", monospace; }
  .tv.low { line-height: 28px; }
  .trow.empty { width: 223px; }
  .trow.empty .tl { border: 0; }
  .trow.last { height: 27px; }
  .snav { width: 318px; height: 40px; flex: none; background: #000; border-top: 2px solid #fff; display: flex; gap: 2px; padding: 1px 0 0 1px; }
  .auto { display: flex; width: 73px; height: 36px; border: 1px solid #fff; padding: 0 4px; background: repeating-conic-gradient(#fff 0 25%, #000 0 50%) 0 0 / 2px 2px; margin-right: -1px; }
  .auto > div { flex: 1; background: #000; border-left: 1px solid #fff; border-right: 1px solid #fff; font: 300 15px/34px "Noto Sans CJK SC", sans-serif; display: flex; justify-content: center; }
  .nb { width: 73px; height: 35px; border: 1px solid #fff; margin-top: 1px; }
  .brand { width: 84px; height: 20px; margin: 6px 0 0 120px; border: 1px solid #8c8c8c; border-radius: 3px; background: #c9c9c9; color: #f0f0f0; padding-left: 3px; font: bold 16px/19px "DejaVu Serif", serif; }

  .right { width: 220px; padding: 3px 0 0 4px; display: flex; flex-direction: column; }
  .right .ptitle { height: 18px; border: 1px solid #716f64; border-radius: 2px; margin-bottom: 5px; padding: 0 2px 0 4px; }
  .right .prow { margin: 0 1px 3px 2px; padding-left: 4px; }
  .right .tools { gap: 6px; padding-left: 1px; margin-bottom: 7px; }
  .all { width: 18px; height: 20px; position: relative; }
  .all small { position: absolute; left: 0; top: 11px; font: 8px/9px "Liberation Sans"; letter-spacing: -.3px; color: #c00; }
  .pl { height: 339px; flex: none; width: 214px; margin-left: 1px; border: 1px solid #7f9db9; background: #fff; box-shadow: 0 -4px #fff; }
  .ph { height: 17px; display: flex; background: #ffffe1; border-bottom: 1px solid #aca899; }
  .ph span { width: 130px; padding-left: 3px; border-right: 1px solid #aca899; }
  .ph span:last-child { width: 82px; border: 0; }
  .pr { height: 17px; display: flex; align-items: center; border-bottom: 1px solid #ece9d8; padding-left: 14px; gap: 5px; }
  .pr.top { padding-left: 2px; gap: 3px; }
  .pr.sel { background: #316ac5; color: #fff; }
  .rt { width: 212px; margin-left: 4px; }
  .rt .tab { width: 96px; }
  .rt .tab.cur { width: 51px; margin-left: 1px; border-left: 1px solid #fff; }
  .rt .tab:not(.cur) { padding-left: 4px; gap: 3px; }

  .errbar { height: 25px; flex: none; display: flex; }
  .errtab { width: 80px; margin: 3px 7px 0 2px; border: 1px solid #8a887c; border-bottom: 0; display: flex; align-items: center; gap: 7px; padding-left: 2px; color: #333; }
  .cream { flex: 1; background: #fffbe6; }
  .fkeys { height: 28px; flex: none; display: flex; padding: 5px 0 0 5px; border-bottom: 2px solid #a8a594; }
  .fk { width: 106px; flex: none; display: flex; gap: 3px; line-height: 16px; }
  kbd { height: 16px; border: 1px solid #77776f; padding: 0 3px; font: 12px/15px "Liberation Sans"; color: #77776f; }
  kbd.lit { background: #f6f5f0; }
  .status { height: 21px; flex: none; display: flex; justify-content: flex-end; padding: 2px 1px 0 0; background: linear-gradient(#f2f0e4, #ece9d8 40%); }
  .status div { width: 71px; height: 17px; border-left: 2px solid #fff; border-right: 2px solid #fff; padding-left: 3px; line-height: 17px; }

  footer { height: 34px; flex: none; display: flex; align-items: center; padding-top: 4px; background: linear-gradient(#1c4aa8 0, #4a92f4 2px, #2a6ae0 4px, #2258d4 8px, #245edc 28px, #1a44a8 34px); color: #fff; font-family: "Liberation Serif", "Noto Sans CJK TC", serif; }
  .start { width: 91px; height: 29px; display: flex; align-items: center; padding-left: 10px; gap: 4px; background: linear-gradient(#6fb86a, #3a963a 4px, #3c9a3c 20px, #2a7a2a); border-radius: 0 10px 10px 0; }
  .start i { font: italic 400 17px/24px "Noto Sans CJK TC", sans-serif; text-shadow: 1px 1px 1px #1c4a1c; }
  .dots { width: 4px; height: 18px; background: radial-gradient(circle, #123a9c 1px, transparent 1.4px) 0 0 / 4px 4px; }
  .d1 { margin-left: 9px; }
  .quick { display: flex; gap: 7px; margin-left: 9px; }
  .more { width: 10px; margin: -10px 5px 0 12px; font-size: 15px; color: #b8d4ff; text-align: center; }
  .tasks { display: flex; gap: 2px; margin-left: 7px; }
  .task { width: 158px; height: 25px; display: flex; align-items: center; padding-left: 10px; gap: 4px; border-radius: 2px; background: linear-gradient(#6aa4ff, #3c81f2 4px, #3a7bee 20px, #2a62d4); }
  .task.act { background: #1e4ea8; box-shadow: inset 1px 1px 2px #0e2c70; }
  .rest { flex: 1; display: flex; justify-content: flex-end; gap: 8px; padding-right: 12px; }
  .tray { width: 244px; height: 31px; display: flex; align-items: center; background: linear-gradient(#1c9cf0, #1290ea 6px, #18a0f4 24px, #0e74cc); border-left: 1px solid #0c4c98; box-shadow: inset 1px 0 #3cc8ff; }
  .tray b { width: 16px; height: 16px; margin-left: -8px; border-radius: 50%; background: #2a80e8; box-shadow: 0 0 0 1px #8cc8ff; }
  .tics { display: flex; gap: 2px; margin: 0 7px 0 1px; }
  .tray > span { font-family: "Liberation Sans", "Noto Sans CJK TC", sans-serif; }
</style>
